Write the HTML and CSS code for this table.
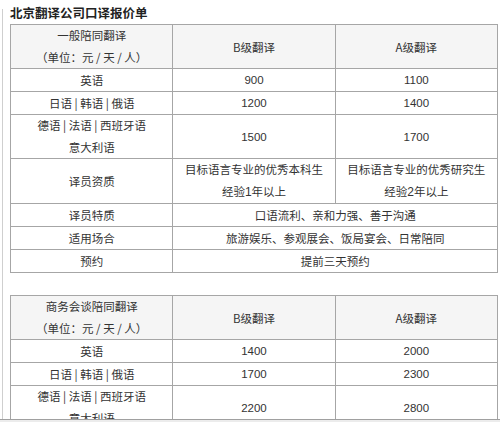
FILE: index.html
```html
<!DOCTYPE html>
<html lang="zh-CN">
<head>
<meta charset="utf-8">
<title>北京翻译公司口译报价单</title>
<link rel="stylesheet" href="styles.css">
</head>
<body>
<div class="page">
  <h1 class="title">北京翻译公司口译报价单</h1>
  <table class="price">
    <tr class="head">
      <td class="two">一般陪同翻译<br>（单位：元 / 天 / 人）</td>
      <td>B级翻译</td>
      <td>A级翻译</td>
    </tr>
    <tr><td>英语</td><td class="num">900</td><td class="num">1100</td></tr>
    <tr><td>日语 | 韩语 | 俄语</td><td class="num">1200</td><td class="num">1400</td></tr>
    <tr><td class="two">德语 | 法语 | 西班牙语<br>意大利语</td><td class="num">1500</td><td class="num">1700</td></tr>
    <tr><td>译员资质</td><td class="two">目标语言专业的优秀本科生<br>经验<span class="num">1</span>年以上</td><td class="two">目标语言专业的优秀研究生<br>经验<span class="num">2</span>年以上</td></tr>
    <tr><td>译员特质</td><td colspan="2">口语流利、亲和力强、善于沟通</td></tr>
    <tr><td>适用场合</td><td colspan="2">旅游娱乐、参观展会、饭局宴会、日常陪同</td></tr>
    <tr><td>预约</td><td colspan="2">提前三天预约</td></tr>
  </table>

  <table class="price second">
    <tr class="head">
      <td class="two">商务会谈陪同翻译<br>（单位：元 / 天 / 人）</td>
      <td>B级翻译</td>
      <td>A级翻译</td>
    </tr>
    <tr><td>英语</td><td class="num">1400</td><td class="num">2000</td></tr>
    <tr><td>日语 | 韩语 | 俄语</td><td class="num">1700</td><td class="num">2300</td></tr>
    <tr><td class="two">德语 | 法语 | 西班牙语<br>意大利语</td><td class="num">2200</td><td class="num">2800</td></tr>
  </table>
</div>
<div class="hbar"></div>
</body>
</html>
```

FILE: styles.css
```css
html, body {
  margin: 0;
  padding: 0;
  background: #ffffff;
  overflow: hidden;
}

body {
  font-family: "Noto Sans CJK SC", "Liberation Sans", sans-serif;
  font-size: 12px;
  color: #333333;
}

.page {
  display: flow-root;
  margin-top: 9px;
  margin-left: 2px;
  padding-left: 7px;
  border-left: 1px solid #cfcfcf;
  min-height: 420px;
}

.title {
  margin: -9px 0 0 0;
  height: 24px;
  line-height: 26px;
  font-size: 12.5px;
  font-weight: bold;
  color: #222222;
}

.price {
  border-collapse: collapse;
  width: 488px;
  table-layout: fixed;
}

.price td {
  border: 1px solid #a6a6a6;
  padding: 0;
  text-align: center;
  line-height: 22px;
  font-size: 11.5px;
  width: 33.3%;
}

.price td.two {
  line-height: 21.5px;
}

.price .head td {
  background: #f5f5f5;
}

.num {
  font-family: "Liberation Sans", Arial, sans-serif;
  font-size: 12px;
}

.second {
  margin-top: 22px;
}

.hbar {
  position: fixed;
  left: 0;
  right: 0;
  bottom: 0;
  height: 2px;
  border-top: 1px solid #a0a0a0;
  background: #ececec;
}
```
